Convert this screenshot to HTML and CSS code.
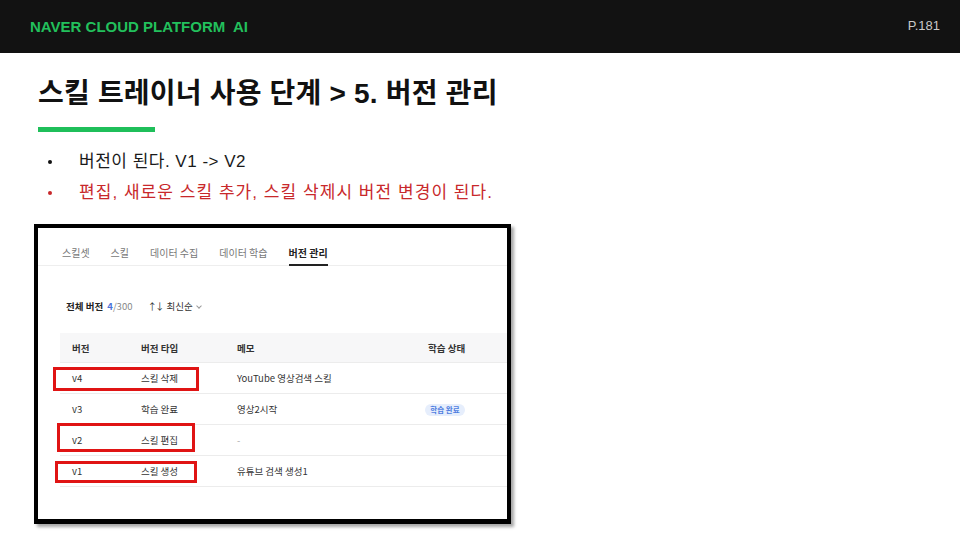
FILE: index.html
```html
<!DOCTYPE html>
<html>
	<head>
		<meta charset="UTF-8">
		<title>스킬 트레이너 - 버전 관리</title>
		<link rel="stylesheet" href="styles.css">
	</head>
	<body>
		<header class="topbar">
			<span class="brand">NAVER CLOUD PLATFORM&nbsp; AI</span>
			<span class="page-no">P.181</span>
		</header>
		<main class="slide">
			<h1 class="title">스킬 트레이너 사용 단계 &gt; 5. 버전 관리</h1>
			<div class="rule"></div>
			<ul class="points">
				<li>버전이 된다. V1 -&gt; V2</li>
				<li class="warn">편집, 새로운 스킬 추가, 스킬 삭제시 버전 변경이 된다.</li>
			</ul>

			<div class="shot">
				<nav class="tabs">
					<span>스킬셋</span>
					<span>스킬</span>
					<span>데이터 수집</span>
					<span>데이터 학습</span>
					<span class="on">버전 관리</span>
				</nav>
				<div class="toolbar">
					<span class="total">전체 버전 <em>4</em><i>/300</i></span>
					<span class="sort"><b class="arrows">↑↓</b> 최신순 <b class="caret"></b></span>
				</div>
				<div class="vtable">
					<div class="row head">
						<span>버전</span><span>버전 타입</span><span>메모</span><span>학습 상태</span>
					</div>
					<div class="row">
						<span>v4</span><span>스킬 삭제</span><span>YouTube 영상검색 스킬</span><span></span>
					</div>
					<div class="row">
						<span>v3</span><span>학습 완료</span><span>영상2시작</span><span><b class="badge">학습 완료</b></span>
					</div>
					<div class="row">
						<span>v2</span><span>스킬 편집</span><span class="dim">-</span><span></span>
					</div>
					<div class="row">
						<span>v1</span><span>스킬 생성</span><span>유튜브 검색 생성1</span><span></span>
					</div>
				</div>
				<!-- 빨간 강조 박스 -->
				<div class="mark m1"></div>
				<div class="mark m2"></div>
				<div class="mark m3"></div>
			</div>
		</main>
	</body>
</html>
```

FILE: styles.css
```css
*{
	margin: 0;
	padding: 0;
	box-sizing: border-box;
}
html,body{
	width: 100%;
	height: 100%;
	background: #fff;
}
body{
	font-family: "Liberation Sans", "Noto Sans CJK KR", sans-serif;
	color: #111;
}

/* 상단 바 */
.topbar{
	height: 53px;
	background: #121212;
	display: flex;
	align-items: center;
	justify-content: space-between;
	padding: 0 20px 0 30px;
}
.brand{
	color: #22c05c;
	font-weight: bold;
	font-size: 15px;
	padding-bottom: 1px;
}
.page-no{
	color: #c9c9c9;
	font-size: 13px;
	padding-bottom: 2px;
}

/* 본문 */
.slide{
	padding-left: 34px;
}
.title{
	margin: 23px 0 0 4px;
	font-size: 28px;
	line-height: 36px;
	font-weight: bold;
	letter-spacing: 0.2px;
}
.rule{
	margin: 15px 0 0 4px;
	width: 117px;
	height: 5px;
	background: #1fbf5a;
}
.points{
	list-style: none;
	margin: 14px 0 0 4px;
}
.points li{
	position: relative;
	padding-left: 41px;
	font-size: 17px;
	line-height: 31px;
	letter-spacing: 0.5px;
	color: #1a1a1a;
}
.points li::before{
	content: "";
	position: absolute;
	left: 10px;
	top: 14px;
	width: 4px;
	height: 4px;
	border-radius: 50%;
	background: #111;
}
.points li.warn{
	color: #c8282b;
	letter-spacing: 1.05px;
}
.points li.warn::before{
	background: #c8282b;
}

/* 캡처 화면 */
.shot{
	position: relative;
	margin-top: 16px;
	width: 477px;
	height: 300px;
	border: 4px solid #000;
	border-bottom-width: 5px;
	box-shadow: 3px 3px 3px rgba(0,0,0,0.35);
	background: #fff;
	font-family: "Noto Sans CJK KR", sans-serif;
	color: #333;
	font-size: 9.5px;
}
.tabs{
	height: 38px;
	display: flex;
	align-items: center;
	gap: 21px;
	padding: 12px 0 0 24px;
	border-bottom: 1px solid #eeeeee;
	color: #777;
	font-size: 10px;
}
.tabs span{
	position: relative;
}
.tabs .on{
	color: #222;
	font-weight: bold;
}
.tabs .on::after{
	content: "";
	position: absolute;
	left: 0;
	right: 0;
	bottom: -6px;
	height: 2px;
	background: #222;
}
.toolbar{
	margin: 32px 0 0 28px;
	height: 16px;
	display: flex;
	align-items: center;
	gap: 15px;
}
.total{
	font-weight: bold;
	color: #222;
}
.total em{
	font-style: normal;
	color: #4a72d8;
	margin-left: 2px;
}
.total i{
	font-style: normal;
	font-weight: normal;
	color: #888;
}
.sort{
	color: #333;
}
.arrows{
	font-weight: normal;
	letter-spacing: -2px;
	margin-right: 2px;
}
.caret{
	display: inline-block;
	width: 4px;
	height: 4px;
	border-right: 1px solid #999;
	border-bottom: 1px solid #999;
	transform: rotate(45deg);
	margin: 0 0 2px 2px;
}

.vtable{
	margin: 19px 0 0 22px;
}
.row{
	display: grid;
	grid-template-columns: 69px 96px 191px 1fr;
	align-items: center;
	height: 31px;
	padding-left: 12px;
	border-bottom: 1px solid #ececec;
}
.row.head{
	height: 30px;
	background: #f7f7f8;
	font-weight: bold;
	color: #333;
}
.dim{
	color: #aaa;
}
.badge{
	display: inline-block;
	width: 40px;
	height: 12px;
	line-height: 12px;
	margin-left: -3px;
	border-radius: 6px;
	background: #e6eefc;
	color: #4f7de0;
	font-size: 7.5px;
	font-weight: bold;
	text-align: center;
}

/* 강조 표시 */
.mark{
	position: absolute;
	border: 3px solid #e01414;
}
.m1{
	left: 15px;
	top: 139px;
	width: 146px;
	height: 24px;
}
.m2{
	left: 19px;
	top: 195px;
	width: 138px;
	height: 29px;
}
.m3{
	left: 17px;
	top: 233px;
	width: 142px;
	height: 22px;
}
```
